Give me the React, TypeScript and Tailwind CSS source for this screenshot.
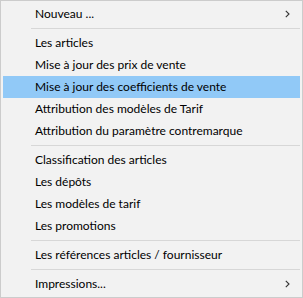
import React from "react";

type Item = { label: string; sub?: boolean; active?: boolean } | "sep";

const items: Item[] = [
  { label: "Nouveau ...", sub: true },
  "sep",
  { label: "Les articles" },
  { label: "Mise à jour des prix de vente" },
  { label: "Mise à jour des coefficients de vente", active: true },
  { label: "Attribution des modèles de Tarif" },
  { label: "Attribution du paramètre contremarque" },
  "sep",
  { label: "Classification des articles" },
  { label: "Les dépôts" },
  { label: "Les modèles de tarif" },
  { label: "Les promotions" },
  "sep",
  { label: "Les références articles / fournisseur" },
  "sep",
  { label: "Impressions...", sub: true },
];

function Chevron() {
  return (
    <svg width="5" height="8" viewBox="0 0 5 8" className="shrink-0">
      <path d="M0.8 0.8 L4 4 L0.8 7.2" fill="none" stroke="#333" strokeWidth="1.1" />
    </svg>
  );
}

export default function App() {
  return (
    <div className="w-[303px] h-[298px] bg-[#f2f2f2] border border-[#cccccc] p-[2px] flex flex-col text-[12px] text-black [font-family:'Lato','Noto_Sans',sans-serif]">
      {items.map((it, i) =>
        it === "sep" ? (
          <div key={i} className="h-[7px] flex items-center pl-[28px]">
            <div className="h-px w-full bg-[#d7d7d7]" />
          </div>
        ) : (
          <div
            key={i}
            className={`h-[22px] shrink-0 flex items-center pl-[32px] pr-[10px] ${
              it.active ? "bg-[#91c9f7]" : ""
            }`}
          >
            <span className="flex-1 leading-none whitespace-nowrap">{it.label}</span>
            {it.sub && <Chevron />}
          </div>
        )
      )}
    </div>
  );
}
